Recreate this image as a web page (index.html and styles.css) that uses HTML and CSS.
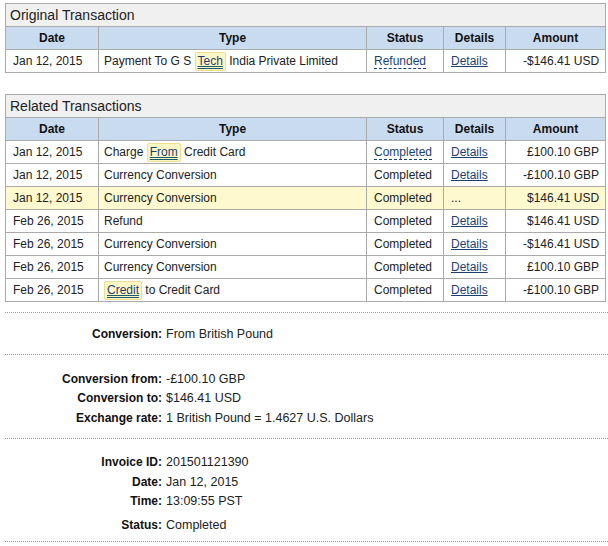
FILE: index.html
```html
<!DOCTYPE html>
<html>

<head>
  <meta charset="utf-8" />
  <title>Transaction Details</title>
  <link rel="stylesheet" href="styles.css">
</head>

<body>
  <table class="txn">
    <colgroup>
      <col class="c-date" /><col class="c-type" /><col class="c-status" /><col class="c-details" /><col class="c-amount" />
    </colgroup>
    <tr><th class="caption" colspan="5">Original Transaction</th></tr>
    <tr class="head"><th>Date</th><th>Type</th><th>Status</th><th>Details</th><th>Amount</th></tr>
    <tr>
      <td>Jan 12, 2015</td>
      <td class="type">Payment To G S <span class="hl"><a href="#">Tech</a></span> India Private Limited</td>
      <td><a class="tip" href="#">Refunded</a></td>
      <td><a href="#">Details</a></td>
      <td class="amt">-$146.41 USD</td>
    </tr>
  </table>

  <table class="txn related">
    <colgroup>
      <col class="c-date" /><col class="c-type" /><col class="c-status" /><col class="c-details" /><col class="c-amount" />
    </colgroup>
    <tr><th class="caption" colspan="5">Related Transactions</th></tr>
    <tr class="head"><th>Date</th><th>Type</th><th>Status</th><th>Details</th><th>Amount</th></tr>
    <tr>
      <td>Jan 12, 2015</td>
      <td class="type">Charge <span class="hl"><a href="#">From</a></span> Credit Card</td>
      <td><a class="tip" href="#">Completed</a></td>
      <td><a href="#">Details</a></td>
      <td class="amt">&pound;100.10 GBP</td>
    </tr>
    <tr>
      <td>Jan 12, 2015</td>
      <td class="type">Currency Conversion</td>
      <td>Completed</td>
      <td><a href="#">Details</a></td>
      <td class="amt">-&pound;100.10 GBP</td>
    </tr>
    <tr class="current">
      <td>Jan 12, 2015</td>
      <td class="type">Currency Conversion</td>
      <td>Completed</td>
      <td>...</td>
      <td class="amt">$146.41 USD</td>
    </tr>
    <tr>
      <td>Feb 26, 2015</td>
      <td class="type">Refund</td>
      <td>Completed</td>
      <td><a href="#">Details</a></td>
      <td class="amt">$146.41 USD</td>
    </tr>
    <tr>
      <td>Feb 26, 2015</td>
      <td class="type">Currency Conversion</td>
      <td>Completed</td>
      <td><a href="#">Details</a></td>
      <td class="amt">-$146.41 USD</td>
    </tr>
    <tr>
      <td>Feb 26, 2015</td>
      <td class="type">Currency Conversion</td>
      <td>Completed</td>
      <td><a href="#">Details</a></td>
      <td class="amt">&pound;100.10 GBP</td>
    </tr>
    <tr>
      <td>Feb 26, 2015</td>
      <td class="type"><span class="hl"><a href="#">Credit</a></span> to Credit Card</td>
      <td>Completed</td>
      <td><a href="#">Details</a></td>
      <td class="amt">-&pound;100.10 GBP</td>
    </tr>
  </table>

  <div class="info first">
    <dl>
      <dt>Conversion:</dt><dd>From British Pound</dd>
    </dl>
  </div>

  <div class="info">
    <dl>
      <dt>Conversion from:</dt><dd>-&pound;100.10 GBP</dd>
      <dt>Conversion to:</dt><dd>$146.41 USD</dd>
      <dt>Exchange rate:</dt><dd>1 British Pound = 1.4627 U.S. Dollars</dd>
    </dl>
  </div>

  <div class="info last">
    <dl>
      <dt>Invoice ID:</dt><dd>201501121390</dd>
      <dt>Date:</dt><dd>Jan 12, 2015</dd>
      <dt>Time:</dt><dd>13:09:55 PST</dd>
      <dt class="gap">Status:</dt><dd class="gap">Completed</dd>
    </dl>
  </div>
</body>

</html>
```

FILE: styles.css
```css
body {
  margin: 3px 0 0 5px;
  font-family: Arial, "Liberation Sans", sans-serif;
  font-size: 12px;
  color: #222;
  background-color: #fff;
}

a {
  color: #1c3f73;
}

table.txn {
  width: 600px;
  border-collapse: collapse;
  table-layout: fixed;
  border: 1px solid #aaa;
}

table.related {
  margin-top: 21px;
}

.c-date { width: 93px; }
.c-type { width: 268px; }
.c-status { width: 77px; }
.c-details { width: 62px; }
.c-amount { width: 100px; }

th,
td {
  border: 1px solid #aaa;
  height: 22px;
  padding: 0 0 0 7px;
  text-align: left;
  white-space: nowrap;
}

th.caption {
  background-color: #f0f0f0;
  font-weight: normal;
  font-size: 14px;
  padding-left: 4px;
  color: #222;
}

tr.head th {
  background-color: #c9dcef;
  text-align: center;
  font-weight: bold;
  padding: 0;
  color: #111;
}

td.type {
  padding-left: 5px;
}

td.amt {
  text-align: right;
  padding: 0 6px 0 0;
}

tr.current td {
  background-color: #fff9cf;
}

/* tooltip-style status link */
a.tip {
  text-decoration: none;
  border-bottom: 1px dashed #1c3f73;
}

/* highlighted keyword */
.hl {
  background-color: #fff6c6;
  border: 1px solid #eedd95;
  border-radius: 2px;
  padding: 1px 2px 2px;
}

.hl a {
  text-decoration: underline double;
  text-decoration-color: #1a5a6a;
}

.info {
  width: 603px;
  border-top: 1px dotted #999;
  padding: 15px 0 10px;
}

.info.first {
  margin-top: 10px;
  padding: 12px 0 9px;
}

.info.last {
  padding: 14px 0 6px;
  border-bottom: 1px dotted #999;
}

dl {
  display: grid;
  grid-template-columns: 157px 1fr;
  column-gap: 4px;
  row-gap: 0;
  margin: 0;
  line-height: 19.5px;
}

dt {
  text-align: right;
  font-weight: bold;
  color: #111;
}

dd {
  margin: 0;
  font-size: 12.5px;
  color: #222;
}

.gap {
  margin-top: 4px;
}
```
